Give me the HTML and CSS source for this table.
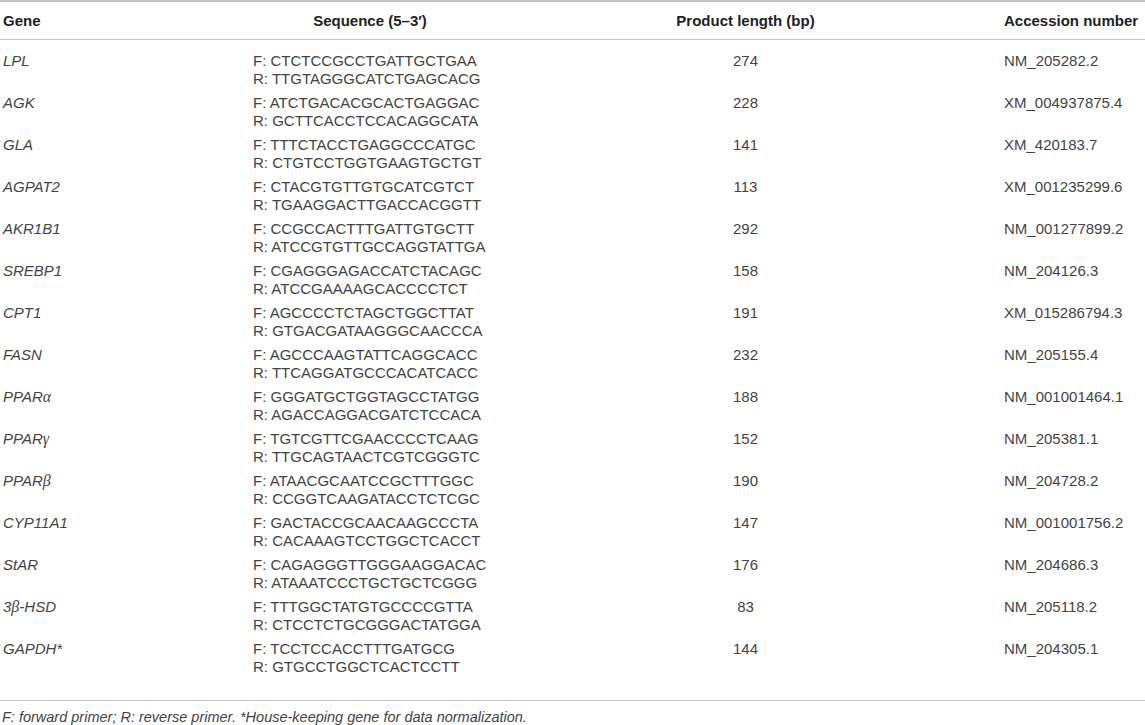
FILE: index.html
```html
<!DOCTYPE html>
<html lang="en">
<head>
<meta charset="utf-8">
<title>Primer table</title>
<link rel="stylesheet" href="styles.css">
</head>
<body>
<table class="primers">
  <colgroup>
    <col class="c-gene">
    <col class="c-seq">
    <col class="c-len">
    <col class="c-acc">
  </colgroup>
  <thead>
    <tr>
      <th class="gene">Gene</th>
      <th class="seq">Sequence (5–3′)</th>
      <th class="len">Product length (bp)</th>
      <th class="acc">Accession number</th>
    </tr>
  </thead>
  <tbody>
    <tr><td class="gene">LPL</td><td class="seq">F: CTCTCCGCCTGATTGCTGAA<br>R: TTGTAGGGCATCTGAGCACG</td><td class="len">274</td><td class="acc">NM_205282.2</td></tr>
    <tr><td class="gene">AGK</td><td class="seq">F: ATCTGACACGCACTGAGGAC<br>R: GCTTCACCTCCACAGGCATA</td><td class="len">228</td><td class="acc">XM_004937875.4</td></tr>
    <tr><td class="gene">GLA</td><td class="seq">F: TTTCTACCTGAGGCCCATGC<br>R: CTGTCCTGGTGAAGTGCTGT</td><td class="len">141</td><td class="acc">XM_420183.7</td></tr>
    <tr><td class="gene">AGPAT2</td><td class="seq">F: CTACGTGTTGTGCATCGTCT<br>R: TGAAGGACTTGACCACGGTT</td><td class="len">113</td><td class="acc">XM_001235299.6</td></tr>
    <tr><td class="gene">AKR1B1</td><td class="seq">F: CCGCCACTTTGATTGTGCTT<br>R: ATCCGTGTTGCCAGGTATTGA</td><td class="len">292</td><td class="acc">NM_001277899.2</td></tr>
    <tr><td class="gene">SREBP1</td><td class="seq">F: CGAGGGAGACCATCTACAGC<br>R: ATCCGAAAAGCACCCCTCT</td><td class="len">158</td><td class="acc">NM_204126.3</td></tr>
    <tr><td class="gene">CPT1</td><td class="seq">F: AGCCCCTCTAGCTGGCTTAT<br>R: GTGACGATAAGGGCAACCCA</td><td class="len">191</td><td class="acc">XM_015286794.3</td></tr>
    <tr><td class="gene">FASN</td><td class="seq">F: AGCCCAAGTATTCAGGCACC<br>R: TTCAGGATGCCCACATCACC</td><td class="len">232</td><td class="acc">NM_205155.4</td></tr>
    <tr><td class="gene">PPAR<span class="greek">α</span></td><td class="seq">F: GGGATGCTGGTAGCCTATGG<br>R: AGACCAGGACGATCTCCACA</td><td class="len">188</td><td class="acc">NM_001001464.1</td></tr>
    <tr><td class="gene">PPAR<span class="greek">γ</span></td><td class="seq">F: TGTCGTTCGAACCCCTCAAG<br>R: TTGCAGTAACTCGTCGGGTC</td><td class="len">152</td><td class="acc">NM_205381.1</td></tr>
    <tr><td class="gene">PPAR<span class="greek">β</span></td><td class="seq">F: ATAACGCAATCCGCTTTGGC<br>R: CCGGTCAAGATACCTCTCGC</td><td class="len">190</td><td class="acc">NM_204728.2</td></tr>
    <tr><td class="gene">CYP11A1</td><td class="seq">F: GACTACCGCAACAAGCCCTA<br>R: CACAAAGTCCTGGCTCACCT</td><td class="len">147</td><td class="acc">NM_001001756.2</td></tr>
    <tr><td class="gene">StAR</td><td class="seq">F: CAGAGGGTTGGGAAGGACAC<br>R: ATAAATCCCTGCTGCTCGGG</td><td class="len">176</td><td class="acc">NM_204686.3</td></tr>
    <tr><td class="gene">3<span class="greek">β</span>-HSD</td><td class="seq">F: TTTGGCTATGTGCCCCGTTA<br>R: CTCCTCTGCGGGACTATGGA</td><td class="len">83</td><td class="acc">NM_205118.2</td></tr>
    <tr><td class="gene">GAPDH*</td><td class="seq">F: TCCTCCACCTTTGATGCG<br>R: GTGCCTGGCTCACTCCTT</td><td class="len">144</td><td class="acc">NM_204305.1</td></tr>
  </tbody>
</table>
<p class="footnote">F: forward primer; R: reverse primer. *House-keeping gene for data normalization.</p>
</body>
</html>
```

FILE: styles.css
```css
html, body {
  margin: 0;
  padding: 0;
  background: #ffffff;
}

body {
  font-family: "Liberation Sans", Arial, Helvetica, sans-serif;
  color: #444444;
  width: 1145px;
}

.primers {
  width: 1145px;
  border-collapse: collapse;
  table-layout: fixed;
  font-size: 15px;
  line-height: 18px;
}

.c-gene { width: 253px; }
.c-seq { width: 234px; }
.c-len { width: 517px; }
.c-acc { width: 141px; }

.primers thead tr {
  border-top: 2px solid #c4c4c4;
  border-bottom: 1px solid #c8c8c8;
}

.primers th {
  font-weight: bold;
  color: #222222;
  padding: 10px 0 9px 0;
  white-space: nowrap;
}

.primers td {
  padding: 3px 0;
  vertical-align: top;
  white-space: nowrap;
}

.primers tbody tr:first-child td {
  padding-top: 12px;
}

.primers tbody tr:last-child {
  border-bottom: 1px solid #c8c8c8;
}

.primers tbody tr:last-child td {
  padding-bottom: 24px;
}

.gene {
  text-align: left;
  padding-left: 3px !important;
}

td.gene {
  font-style: italic;
}

.seq { text-align: left; }
th.seq { text-align: center; }
.len { text-align: center; }
.acc { text-align: left; }

.greek {
  font-family: "Liberation Serif", "Times New Roman", serif;
  font-size: 16px;
}

.footnote {
  margin: 7px 0 0 0;
  padding-left: 2px;
  font-size: 14.5px;
  line-height: 18px;
  font-style: italic;
  color: #444444;
}
```
